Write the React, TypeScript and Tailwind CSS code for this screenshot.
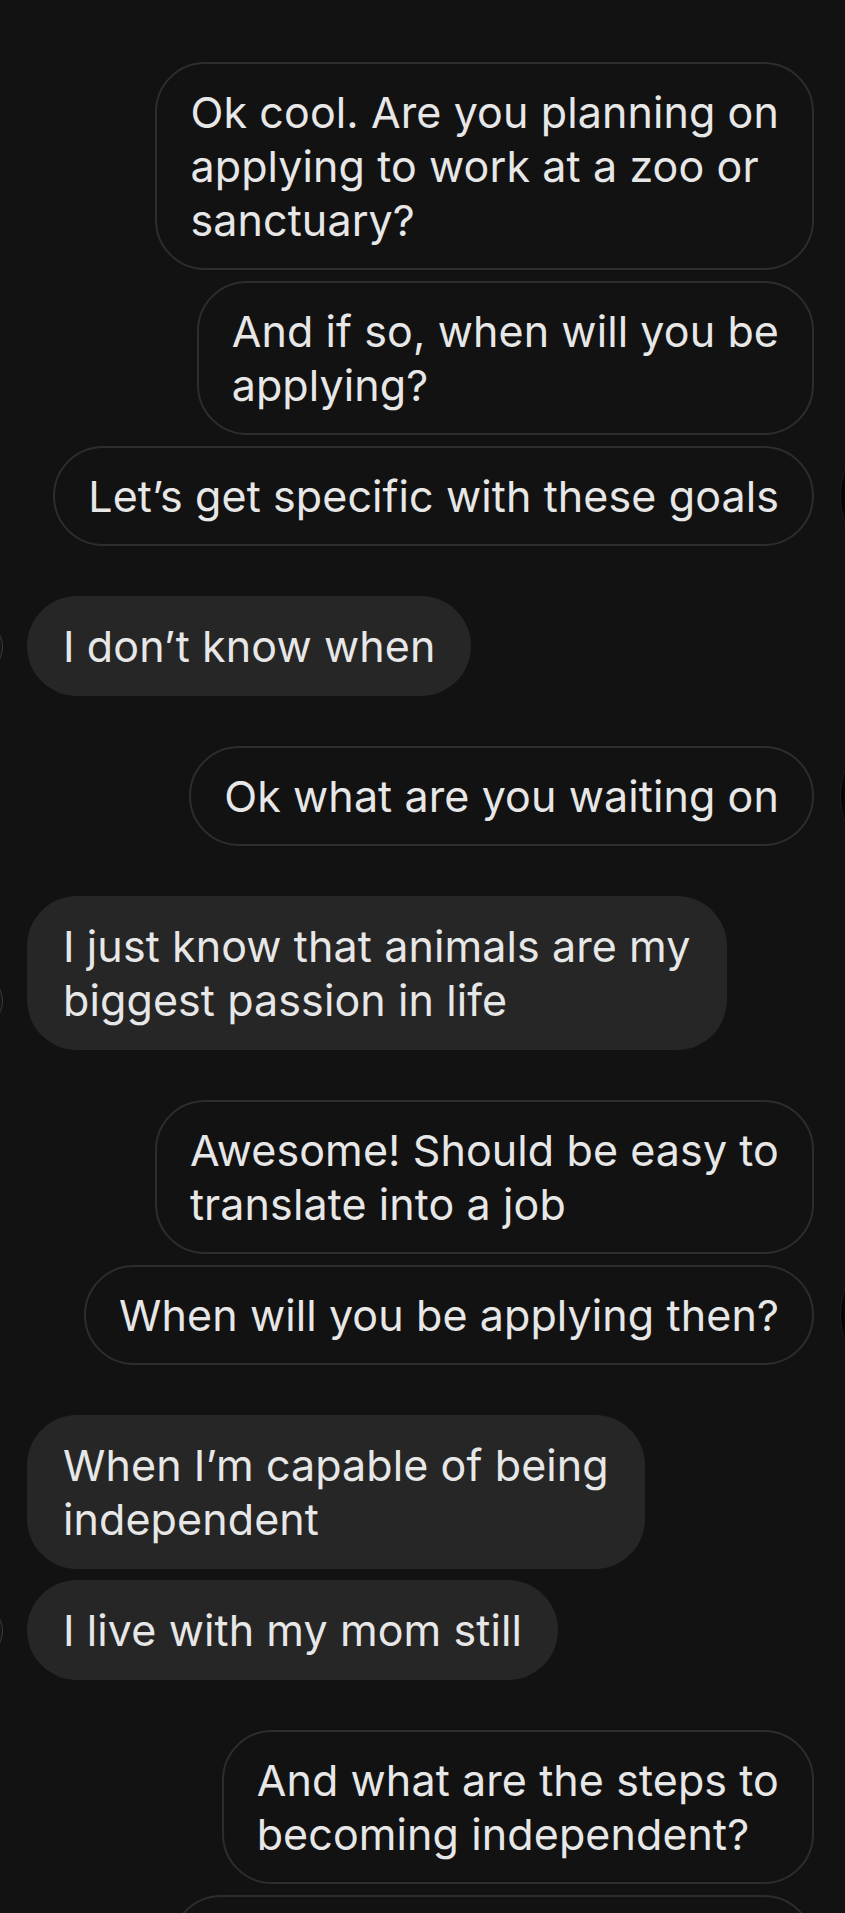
import React from "react";

type Msg = {
  side: "out" | "in";
  lines: string[];
  gap: "s" | "l" | "none";
  tail?: boolean;
};

const msgs: Msg[] = [
  { side: "out", lines: ["Ok cool. Are you planning on", "applying to work at a zoo or", "sanctuary?"], gap: "none" },
  { side: "out", lines: ["And if so, when will you be", "applying?"], gap: "s" },
  { side: "out", lines: ["Let\u2019s get specific with these goals"], gap: "s", tail: true },
  { side: "in", lines: ["I don\u2019t know when"], gap: "l", tail: true },
  { side: "out", lines: ["Ok what are you waiting on"], gap: "l", tail: true },
  { side: "in", lines: ["I just know that animals are my", "biggest passion in life"], gap: "l", tail: true },
  { side: "out", lines: ["Awesome! Should be easy to", "translate into a job"], gap: "l" },
  { side: "out", lines: ["When will you be applying then?"], gap: "s", tail: true },
  { side: "in", lines: ["When I\u2019m capable of being", "independent"], gap: "l" },
  { side: "in", lines: ["I live with my mom still"], gap: "s", tail: true },
  { side: "out", lines: ["And what are the steps to", "becoming independent?"], gap: "l" },
];

function Lines({ lines }: { lines: string[] }) {
  return (
    <>
      {lines.map((l, i) => (
        <div key={i}>{l}</div>
      ))}
    </>
  );
}

export default function App() {
  return (
    <div className="w-[845px] h-[1913px] overflow-hidden bg-[#121212] pt-[62px] flex flex-col [font-family:Inter,'Noto_Sans',sans-serif] text-[43px] leading-[54px] text-[#e7e7e7] tracking-[0.1px]">
      {msgs.map((m, i) => {
        const gapCls = m.gap === "none" ? "" : m.gap === "s" ? "mt-[11px]" : "mt-[50px]";
        if (m.side === "out") {
          return (
            <div key={i} className={`relative flex justify-end pr-[31px] ${gapCls}`}>
              <div className="whitespace-nowrap rounded-[50px] border-2 border-[#2d2d2d] bg-[#121212] px-[33px] py-[21px]">
                <Lines lines={m.lines} />
              </div>
              {m.tail && (
                <div className="absolute left-[840px] top-1/2 -translate-y-1/2 w-[150px] h-[150px] rounded-full bg-[#050505] border border-[#1e1e1e]" />
              )}
            </div>
          );
        }
        return (
          <div key={i} className={`relative flex justify-start pl-[27px] ${gapCls}`}>
            <div className="whitespace-nowrap rounded-[50px] bg-[#262626] px-[36px] py-[23px]">
              <Lines lines={m.lines} />
            </div>
            {m.tail && (
              <div className="absolute left-[-53px] bottom-[21px] w-[56px] h-[56px] rounded-full bg-[#161616] border border-[#3a3a3a]" />
            )}
          </div>
        );
      })}
      <div className="relative flex justify-end pr-[31px] mt-[11px]">
        <div className="w-[643px] h-[154px] rounded-[50px] border-2 border-[#2d2d2d] bg-[#121212]" />
      </div>
    </div>
  );
}
